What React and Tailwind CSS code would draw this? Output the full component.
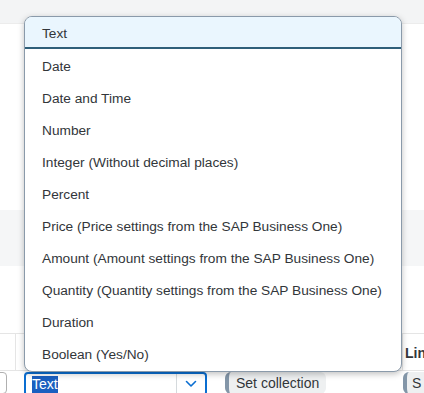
import React from 'react';

const OPTIONS = [
    'Text',
    'Date',
    'Date and Time',
    'Number',
    'Integer (Without decimal places)',
    'Percent',
    'Price (Price settings from the SAP Business One)',
    'Amount (Amount settings from the SAP Business One)',
    'Quantity (Quantity settings from the SAP Business One)',
    'Duration',
    'Boolean (Yes/No)',
];

function Chevron() {
    return (
        <svg width="12" height="8" viewBox="0 0 12 8" fill="none">
            <path d="M1.5 1.5 L6 6 L10.5 1.5" stroke="#0a6ed1" strokeWidth="1.6" strokeLinecap="round" strokeLinejoin="round" />
        </svg>
    );
}

export default function App() {
    return (
        <div className="relative w-[424px] h-[393px] overflow-hidden bg-white text-[#32363a]" style={{ fontFamily: '"Liberation Sans", Arial, sans-serif' }}>
            {/* page behind the popover */}
            <div className="flex flex-col">
                <div className="h-[24px] bg-[#f3f4f5] border-b border-[#ececec]"></div>
                <div className="h-[186px] bg-white"></div>
                <div className="h-[56px] bg-[#f5f6f7]"></div>
                <div className="h-[67px] bg-white"></div>

                {/* table header */}
                <div className="h-[38px] flex border-t border-b border-[#e5e5e5]">
                    <div className="w-[16px] shrink-0 border-r border-[#e5e5e5]"></div>
                    <div className="flex-1"></div>
                    <div className="w-[22px] shrink-0 border-l border-[#e5e5e5] flex items-center pl-[2px] pt-[2px] text-[14px] font-bold text-[#32363a] whitespace-nowrap">Lin</div>
                </div>

                {/* table row */}
                <div className="h-[22px] flex items-start pt-[1px]">
                    <div className="w-[8px] shrink-0 h-[22px] -ml-[1px] border border-[#b0b0b0] rounded-r-[4px] bg-white"></div>
                    <div className="ml-[17px] shrink-0 w-[183px] h-[24px] border-2 border-[#0a6ed1] rounded-[4px] flex items-stretch bg-white">
                        <div className="flex-1 flex items-center pl-[6px]">
                            <span className="bg-[#1a5fc0] text-white text-[14px] leading-[17px]">Text</span>
                        </div>
                        <div className="w-[29px] border-l border-[#d5dadd] flex items-center justify-center">
                            <Chevron />
                        </div>
                    </div>
                    <div className="ml-[18px] shrink-0 w-[101px] h-[22px] rounded-[6px] bg-[#eef0f1] border-l-[4px] border-[#8396a8] flex items-center pl-[7px] text-[14px]">Set collection</div>
                    <div className="ml-[77px] shrink-0 w-[30px] h-[22px] rounded-l-[6px] bg-[#eef0f1] border-l-[4px] border-[#8396a8] flex items-center pl-[5px] text-[14px]">S</div>
                </div>
            </div>

            {/* dropdown popover */}
            <div className="absolute left-[24px] top-[16px] w-[378px] rounded-[8px] border border-[#8a9aaa] bg-white shadow-[0_2px_6px_rgba(0,0,0,0.25)] overflow-hidden pb-[2px]">
                {OPTIONS.map((opt, idx) => (
                    <div
                        key={opt}
                        className={`h-[32px] flex items-center pl-[17px] pt-[4px] text-[13.7px] ${idx === 0 ? 'bg-[#eaf6fe] border-b-2 border-[#2f5f79]' : ''}`}
                    >
                        {opt}
                    </div>
                ))}
            </div>
        </div>
    );
}
